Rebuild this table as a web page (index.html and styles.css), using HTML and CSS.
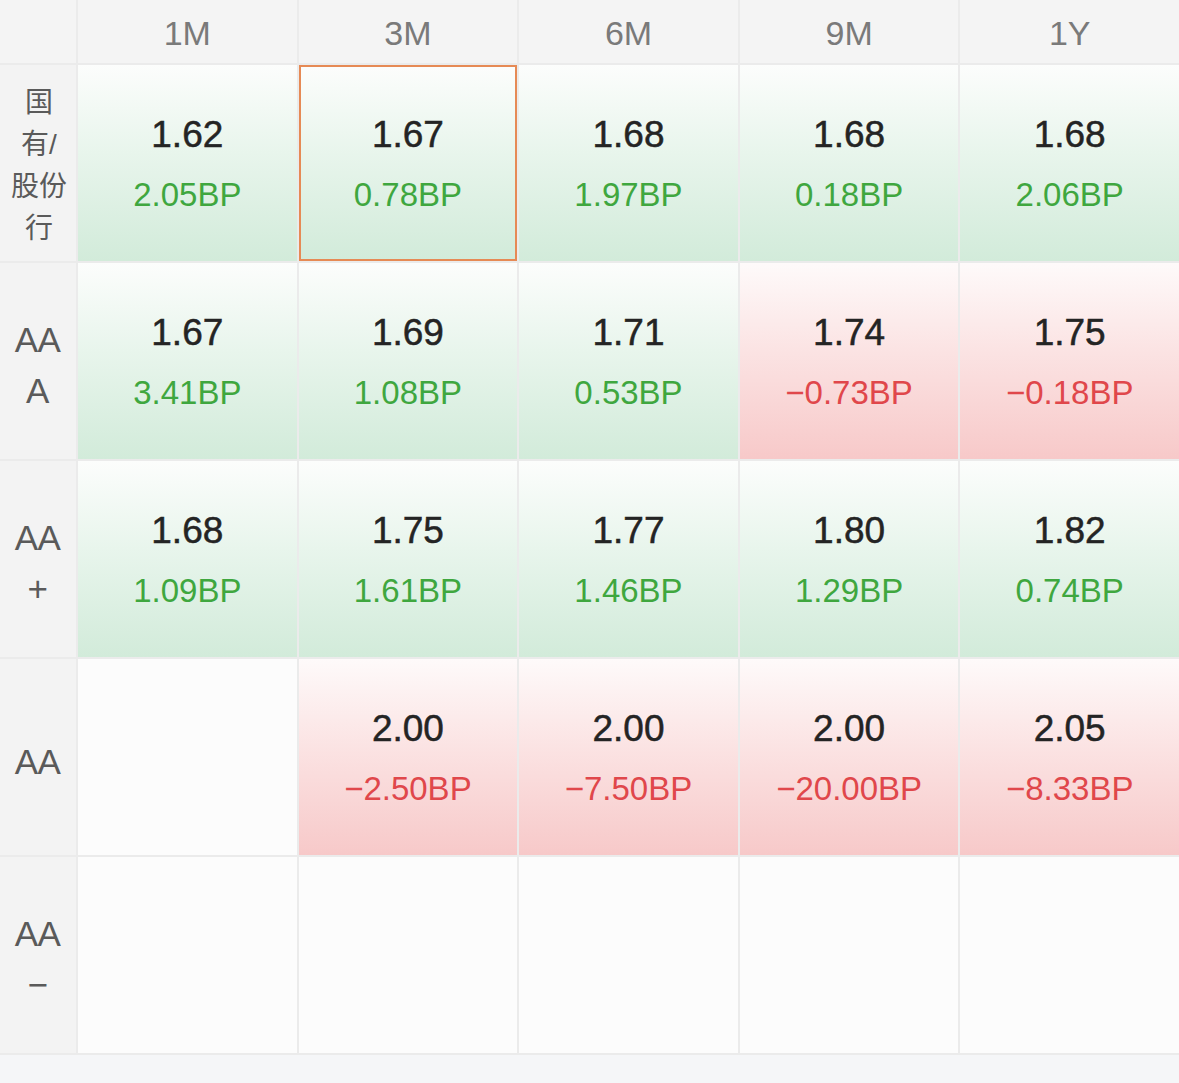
FILE: index.html
```html
<!DOCTYPE html>
<html lang="zh-CN">
<head>
  <meta charset="UTF-8" />
  <title>存单利率</title>
  <meta name="viewport" content="width=device-width, initial-scale=1" />
  <link rel="stylesheet" href="styles.css">
</head>
<body>
  <div id="board">
    <div class="corner"></div>
    <div class="head">1M</div>
    <div class="head">3M</div>
    <div class="head">6M</div>
    <div class="head">9M</div>
    <div class="head">1Y</div>

    <div class="label cn">国<br>有/<br>股份<br>行</div>
    <div class="cell up"><span class="val">1.62</span><span class="bp">2.05BP</span></div>
    <div class="cell up active"><span class="val">1.67</span><span class="bp">0.78BP</span></div>
    <div class="cell up"><span class="val">1.68</span><span class="bp">1.97BP</span></div>
    <div class="cell up"><span class="val">1.68</span><span class="bp">0.18BP</span></div>
    <div class="cell up"><span class="val">1.68</span><span class="bp">2.06BP</span></div>

    <div class="label">AA<br>A</div>
    <div class="cell up"><span class="val">1.67</span><span class="bp">3.41BP</span></div>
    <div class="cell up"><span class="val">1.69</span><span class="bp">1.08BP</span></div>
    <div class="cell up"><span class="val">1.71</span><span class="bp">0.53BP</span></div>
    <div class="cell down"><span class="val">1.74</span><span class="bp">&minus;0.73BP</span></div>
    <div class="cell down"><span class="val">1.75</span><span class="bp">&minus;0.18BP</span></div>

    <div class="label">AA<br>+</div>
    <div class="cell up"><span class="val">1.68</span><span class="bp">1.09BP</span></div>
    <div class="cell up"><span class="val">1.75</span><span class="bp">1.61BP</span></div>
    <div class="cell up"><span class="val">1.77</span><span class="bp">1.46BP</span></div>
    <div class="cell up"><span class="val">1.80</span><span class="bp">1.29BP</span></div>
    <div class="cell up"><span class="val">1.82</span><span class="bp">0.74BP</span></div>

    <div class="label">AA</div>
    <div class="cell"></div>
    <div class="cell down"><span class="val">2.00</span><span class="bp">&minus;2.50BP</span></div>
    <div class="cell down"><span class="val">2.00</span><span class="bp">&minus;7.50BP</span></div>
    <div class="cell down"><span class="val">2.00</span><span class="bp">&minus;20.00BP</span></div>
    <div class="cell down"><span class="val">2.05</span><span class="bp">&minus;8.33BP</span></div>

    <div class="label">AA<br>&minus;</div>
    <div class="cell"></div>
    <div class="cell"></div>
    <div class="cell"></div>
    <div class="cell"></div>
    <div class="cell"></div>
  </div>
</body>
</html>
```

FILE: styles.css
```css
body{
  margin:0;background:#f5f6f8;
  font-family:'Liberation Sans','Noto Sans CJK SC',sans-serif;
}
#board{
  display:grid;
  grid-template-columns:76px repeat(5,1fr);
  grid-template-rows:63px repeat(5,196px);
  gap:2px;
  background:#ebebeb;
  border-bottom:2px solid #ebebeb;
}
.corner,.head{background:#f4f4f4;}
.head{
  display:flex;align-items:center;justify-content:center;
  font-size:34px;color:#7a7a7a;padding-top:4px;
}
.label{
  background:#f3f3f3;
  display:flex;align-items:center;justify-content:center;text-align:center;
  font-size:35px;line-height:51px;color:#5a5a5a;letter-spacing:-0.5px;
  padding:8px 1px 0 0;box-sizing:border-box;
}
.label.cn{font-size:28px;line-height:42px;padding:6px 0 0 2px;letter-spacing:0;}
.cell{
  background:#fcfcfc;
  display:flex;flex-direction:column;align-items:center;justify-content:center;
  box-sizing:border-box;
}
.cell.up{background:linear-gradient(to bottom,#fcfdfc 0%,#e8f5ec 45%,#d2ebda 100%);}
.cell.down{background:linear-gradient(to bottom,#fefafa 0%,#fbe3e3 45%,#f7c9c9 100%);}
.cell.active{border:2px solid #e68a55;}
.val{
  font-size:37px;color:#242424;line-height:46px;
  -webkit-text-stroke:0.5px #242424;
  margin-top:1px;
}
.bp{font-size:33px;line-height:40px;margin-top:17px;}
.up .bp{color:#3fa73f;}
.down .bp{color:#e0474b;}
```
